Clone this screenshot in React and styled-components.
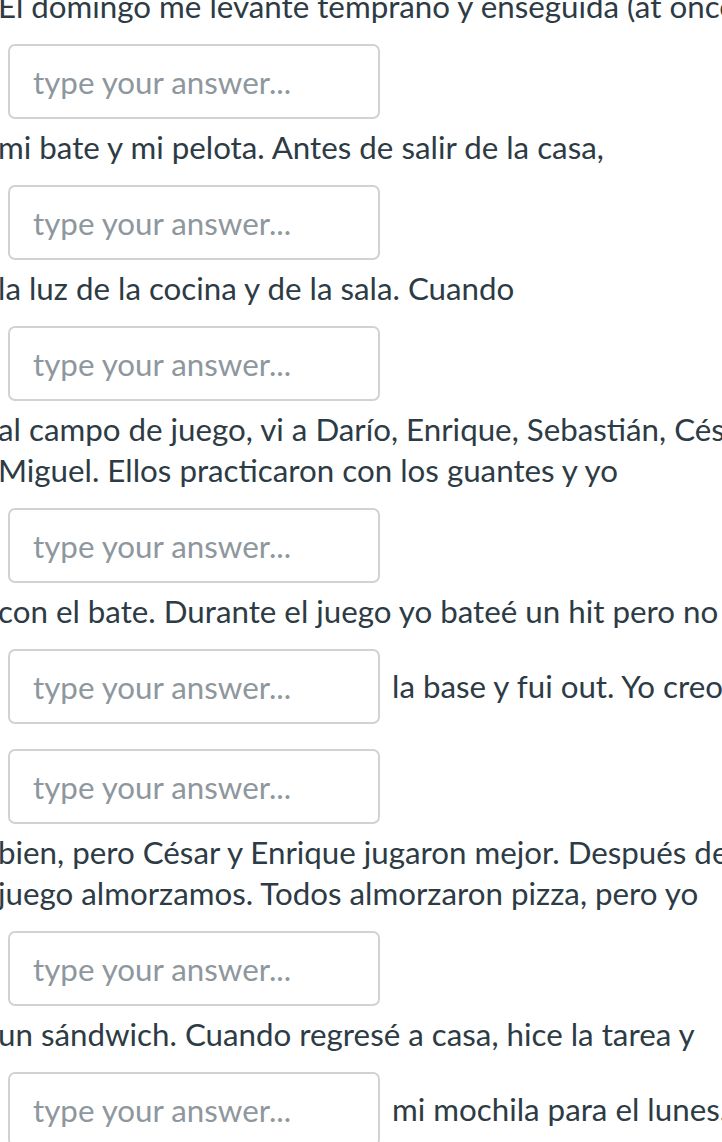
import React from "react";
import styled, { createGlobalStyle } from "styled-components";

const GlobalStyle = createGlobalStyle`
  html, body {
    margin: 0;
    padding: 0;
    background: #ffffff;
    overflow: hidden;
  }
  body {
    font-family: Lato, "Open Sans", "Liberation Sans", sans-serif;
    color: #2d3b45;
  }
`;

// The passage, scrolled a little past its left edge
const Passage = styled.div`
  margin: -14px 0 0 -2px;
  width: 900px;
  font-size: 31.3px;
`;

// A plain line of the passage text
const TextLine = styled.div`
  line-height: 41px;
  height: 41px;
  white-space: nowrap;
`;

// A line that carries a blank, optionally followed by text
const BlankLine = styled.div`
  display: flex;
  align-items: center;
  padding: 17px 0 8px;
  white-space: nowrap;
`;

const Blank = styled.input`
  box-sizing: border-box;
  width: 372px;
  height: 75px;
  margin-left: 10px;
  padding: 0 23px;
  border: 2px solid #cfd3d6;
  border-radius: 7px;
  background: #fff;
  font-family: inherit;
  font-size: 31.3px;
  color: #2d3b45;
  outline: none;

  &::placeholder {
    color: #8e979d;
    opacity: 1;
  }
`;

const After = styled.span`
  margin-left: 12px;
  line-height: 41px;
`;

const passage = [
  { text: "El domingo me levanté temprano y enseguida (at once)" },
  { blank: true },
  { text: "mi bate y mi pelota. Antes de salir de la casa," },
  { blank: true },
  { text: "la luz de la cocina y de la sala. Cuando" },
  { blank: true },
  { text: "al campo de juego, vi a Darío, Enrique, Sebastián, César y" },
  { text: "Miguel. Ellos practicaron con los guantes y yo" },
  { blank: true },
  { text: "con el bate. Durante el juego yo bateé un hit pero no" },
  { blank: true, after: "la base y fui out. Yo creo que" },
  { blank: true },
  { text: "bien, pero César y Enrique jugaron mejor. Después del" },
  { text: "juego almorzamos. Todos almorzaron pizza, pero yo" },
  { blank: true },
  { text: "un sándwich. Cuando regresé a casa, hice la tarea y" },
  { blank: true, after: "mi mochila para el lunes." },
];

export default function App() {
  return (
    <>
      <GlobalStyle />
      <Passage>
        {passage.map((part, i) =>
          part.blank ? (
            <BlankLine key={i}>
              <Blank type="text" placeholder="type your answer..." />
              {part.after && <After>{part.after}</After>}
            </BlankLine>
          ) : (
            <TextLine key={i}>{part.text}</TextLine>
          )
        )}
      </Passage>
    </>
  );
}
